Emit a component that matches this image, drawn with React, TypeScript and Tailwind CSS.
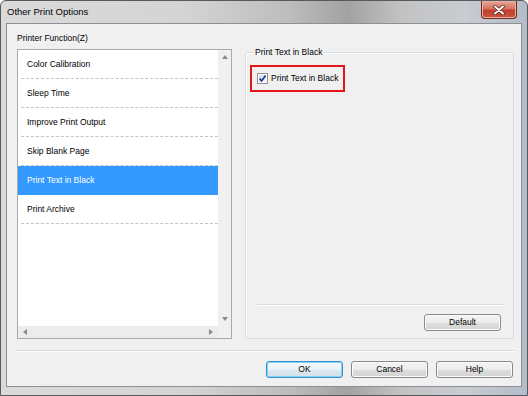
import React from "react"

const functions = [
  "Color Calibration",
  "Sleep Time",
  "Improve Print Output",
  "Skip Blank Page",
  "Print Text in Black",
  "Print Archive",
]

function Arrow({ dir }: { dir: "up" | "down" | "left" | "right" }) {
  const pts = {
    up: "0,4 3,0 6,4",
    down: "0,0 6,0 3,4",
    left: "4,0 4,6 0,3",
    right: "0,0 0,6 4,3",
  }[dir]
  const w = dir === "up" || dir === "down" ? 6 : 4
  const h = dir === "up" || dir === "down" ? 4 : 6
  return (
    <svg width={w} height={h} viewBox={`0 0 ${w} ${h}`}>
      <polygon points={pts} fill="#8a8a8a" />
    </svg>
  )
}

function WinButton({ label, isDefault = false }: { label: string; isDefault?: boolean }) {
  return (
    <button
      type="button"
      className={
        isDefault
          ? "flex h-[17px] w-[77px] items-center justify-center rounded-[3px] border border-[#3c8fd0] bg-[linear-gradient(180deg,#f4f9fc_0%,#ebf3f8_50%,#dde9f1_51%,#d3e1ea_100%)] text-[8.5px] text-black shadow-[inset_0_0_0_1px_#7fd3f5]"
          : "flex h-[17px] w-[77px] items-center justify-center rounded-[3px] border border-[#8a8a8a] bg-[linear-gradient(180deg,#f4f4f4_0%,#ececec_50%,#dedede_51%,#d3d3d3_100%)] text-[8.5px] text-black shadow-[inset_0_0_0_1px_#fbfbfb]"
      }
    >
      {label}
    </button>
  )
}

export default function App() {
  const selected = 4

  return (
    <div className="h-[396px] w-[528px] overflow-hidden bg-white font-['Liberation_Sans',Arial,sans-serif]">
      <div className="flex h-full flex-col rounded-t-[6px] border border-[#555a60] bg-[linear-gradient(90deg,#dadada_0%,#d4d4d4_35%,#bcbcbc_55%,#a2a2a2_66%,#c2c2c2_76%,#c9ccd0_88%,#b3bcc8_100%)] px-[5px] pb-[8px]">
        {/* Title bar */}
        <div className="flex h-[22px] items-start justify-between">
          <span className="pl-[1px] pt-[5px] text-[9.5px] leading-[12px] text-black">Other Print Options</span>
          <div className="mr-[5px] flex h-[18px] w-[36px] items-center justify-center rounded-b-[4px] border border-t-0 border-[#6e2a22] bg-[linear-gradient(180deg,#e8a899_0%,#d4715f_45%,#c0402b_55%,#c9543c_100%)] shadow-[inset_0_0_0_1px_#ecb0a4]">
            <svg width="12" height="10" viewBox="0 0 12 10">
              <path d="M2 1.5 L10 8.5 M10 1.5 L2 8.5" stroke="#5a1d16" strokeWidth="3.4" strokeLinecap="round" />
              <path d="M2 1.5 L10 8.5 M10 1.5 L2 8.5" stroke="#ffffff" strokeWidth="2" strokeLinecap="round" />
            </svg>
          </div>
        </div>

        {/* Client area */}
        <div className="flex flex-1 flex-col border border-[#8c9096] bg-[#f0f0f0] pl-[10px] pr-[7px] pt-[8px] text-[8.5px] text-black">
          <div className="flex h-[307px] gap-[13px]">
            {/* Left: function list */}
            <div className="flex w-[215px] flex-col">
              <div className="mb-[5px] h-[12px] leading-[12px]">Printer Function(Z)</div>
              <div className="flex flex-1 flex-col border border-[#a7a9ab] bg-white">
                <div className="flex flex-1">
                  <div className="flex flex-1 flex-col">
                    {functions.map((name, i) => (
                      <div
                        key={name}
                        className={
                          i === selected
                            ? "flex h-[29px] flex-col bg-[#3399ff] text-white"
                            : "flex h-[29px] flex-col"
                        }
                      >
                        <div className="flex flex-1 items-center pl-[9px]">{name}</div>
                        <div
                          className={
                            i === selected
                              ? "ml-[3px] border-b border-dashed border-transparent"
                              : "ml-[3px] border-b border-dashed border-[#c4c4c4]"
                          }
                        />
                      </div>
                    ))}
                  </div>
                  {/* Vertical scrollbar */}
                  <div className="flex w-[13px] flex-col items-center justify-between bg-[#f0f0f0] py-[5px]">
                    <Arrow dir="up" />
                    <Arrow dir="down" />
                  </div>
                </div>
                {/* Horizontal scrollbar */}
                <div className="flex h-[12px]">
                  <div className="flex flex-1 items-center justify-between bg-[#ececec] px-[5px]">
                    <Arrow dir="left" />
                    <Arrow dir="right" />
                  </div>
                  <div className="w-[13px] bg-[#f0f0f0]" />
                </div>
              </div>
            </div>

            {/* Right: group box */}
            <fieldset className="mt-[15px] flex flex-1 flex-col rounded-[3px] border border-[#d5dfe5] pl-[4px] shadow-[inset_1px_1px_0_#ffffff]">
              <legend className="ml-[4px] px-[1px] leading-[11px]">Print Text in Black</legend>
              <div className="mt-[7px] flex h-[27px] w-[95px] items-center gap-[3px] border-2 border-[#e3141c] pl-[5px]">
                <svg width="11" height="11" viewBox="0 0 11 11">
                  <defs>
                    <linearGradient id="cb" x1="0" y1="0" x2="1" y2="1">
                      <stop offset="0" stopColor="#cbd9ea" />
                      <stop offset="1" stopColor="#f4f8fc" />
                    </linearGradient>
                  </defs>
                  <rect x="0.5" y="0.5" width="10" height="10" fill="#ffffff" stroke="#8e8f8f" />
                  <rect x="2" y="2" width="7" height="7" fill="url(#cb)" />
                  <path d="M2.6 5.6 L4.6 8 L8.6 2.6" fill="none" stroke="#1f3c87" strokeWidth="1.7" />
                </svg>
                <span>Print Text in Black</span>
              </div>
              <div className="flex-1" />
              <div className="ml-[7px] mr-[9px] border-b border-[#d5dfe5] shadow-[0_1px_0_#ffffff]" />
              <div className="flex justify-end pb-[7px] pr-[12px] pt-[9px]">
                <WinButton label="Default" />
              </div>
            </fieldset>
          </div>

          <div className="mt-[11px] border-b border-[#d5d5d5] shadow-[0_1px_0_#ffffff]" />

          <div className="mt-[10px] flex justify-end gap-[8px] pr-[1px]">
            <WinButton label="OK" isDefault />
            <WinButton label="Cancel" />
            <WinButton label="Help" />
          </div>
        </div>
      </div>
    </div>
  )
}
